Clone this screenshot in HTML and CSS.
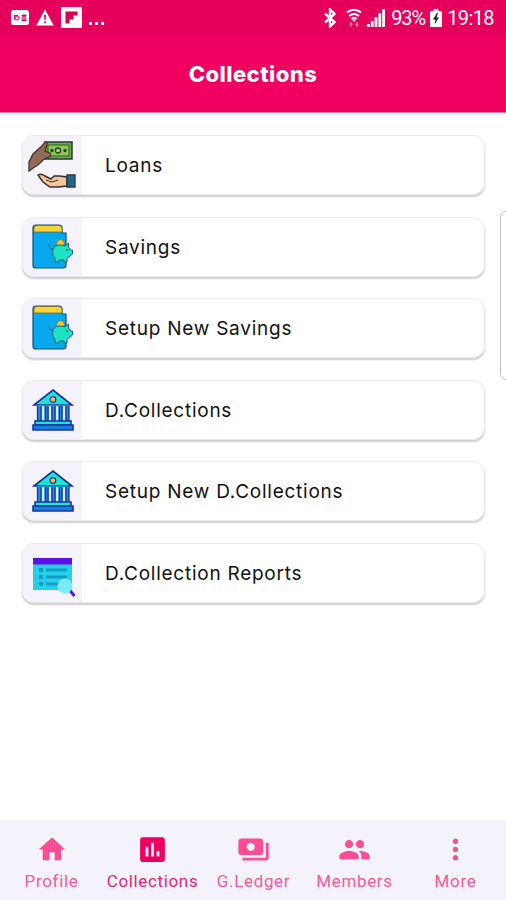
FILE: index.html
```html
<!DOCTYPE html>
<html lang="en">
<head>
    <meta charset="UTF-8">
    <meta name="viewport" content="width=device-width, initial-scale=1.0">
    <title>Collections</title>
    <link rel="stylesheet" href="styles.css">
</head>
<body>
    <svg class="defs" width="0" height="0">
        <symbol id="wallet" viewBox="0 0 42 46">
            <path d="M2 4Q2 1 5 1H28Q31 1 31 4V9H35V41Q35 44 32 44H5Q2 44 2 41Z" fill="#06a9ee" stroke="#164b76" stroke-width="1.2"/>
            <path d="M3 8V4Q3 1.5 6 1.5H28Q31 1.5 31 5V8Z" fill="#fbd43c" stroke="#7a6a2c" stroke-width=".8"/>
            <circle cx="29.500" cy="19.500" r="3.800" fill="#fcc52e" stroke="#8b7130" stroke-width=".7"/>
            <path d="M22 26C22 21 29 20 34 22L37.500 19V23L39.500 26H41.500V30L39 32 36 34V38H33V36H28V38H24V34C22 32 21 29 22 26Z" fill="#1de3c6" stroke="#12647b" stroke-width="1"/>
            <path d="M18 20Q18 26 22 25" fill="none" stroke="#12647b"/>
            <circle cx="36" cy="26" r=".9" fill="#164b60"/>
        </symbol>
        <symbol id="bank" viewBox="0 0 42 42">
            <g stroke="#1b349a" stroke-width="1.600">
                <path d="M2 16 21 1 40 16Z" fill="#1ee2d3"/>
                <path d="M5 16H37V33H5Z" fill="#1b8fe0" stroke="none"/>
                <path d="M11 17V33M18 17V33M25 17V33M32 17V33" stroke="#d9ecff" stroke-width="2.600"/>
                <path d="M5.500 17V33M9 17V33M13.500 17V33M16 17V33M20 17V33M23 17V33M27.500 17V33M30 17V33M34 17V33M37 17V33" stroke-width="1.300"/>
                <path d="M3 32H39V36H3Z" fill="#1ee2d3"/>
                <path d="M1 36H41V41H1Z" fill="#1580dc"/>
                <circle cx="21" cy="10.500" r="2.800" fill="#f3bf4a" stroke-width="1.200"/>
            </g>
        </symbol>
    </svg>

    <header class="top">
        <div class="status">
            <div class="status-left">
                <svg width="18" height="15" viewBox="0 0 18 15"><rect width="18" height="15" rx="2.500" fill="#fff"/><g fill="none" stroke="#e4005b" stroke-width="1"><circle cx="6" cy="8" r="2"/><path d="M3 5.500H7M3.500 5V9.500M10.500 5.500H15.500M10.500 10.500H15.500M13 4V11"/><circle cx="13" cy="8" r="2"/></g></svg>
                <svg width="18" height="17" viewBox="0 0 18 17"><path d="M9 .5 17.800 16.500H.2Z" fill="#fff"/><path d="M8 6H10L9.600 11H8.400ZM8.200 12.200H9.800V14H8.200Z" fill="#e4005b"/></svg>
                <svg width="21" height="21" viewBox="0 0 21 21"><path d="M0 0H21V21H0Z" fill="#fff"/><path d="M4.500 4.500H16.500V8.500H12.500V12.500H8.500V16.500H4.500Z" fill="#d40052"/></svg>
                <svg width="15" height="21" viewBox="0 0 15 21"><path d="M0 15H3V18H0ZM6 15H9V18H6ZM12 15H15V18H12Z" fill="#fff"/></svg>
            </div>
            <div class="status-right">
                <svg class="bluetooth" width="12" height="20" viewBox="0 0 12 20"><path d="M1 5.500 10.500 14 6 18.500V1.500L10.500 6 1 14.500" fill="none" stroke="#fff" stroke-width="2.400"/></svg>
                <svg class="wifi" width="16" height="20" viewBox="0 0 16 20"><g fill="none" stroke="#fff" stroke-width="2"><path d="M.8 4.500Q8-1 15.200 4.500M3 8Q8 4 13 8M5.200 11Q8 8.500 10.800 11"/></g><path d="M6 11.500H10L8 14Z" fill="#fff"/><path d="M3 16.500 5 14 7 16.500H5.600V19H4.400V16.500ZM9 16.500H10.400V14H11.600V16.500H13L11 19Z" fill="#ff8ab8"/></svg>
                <svg class="signal" width="18" height="18" viewBox="0 0 18 18"><path d="M0 15H2.800V18H0ZM3.800 12H6.600V18H3.800ZM7.600 8H10.400V18H7.600ZM11.400 4H14.200V18H11.400ZM15.200 0H18V18H15.200Z" fill="#fff"/></svg>
                <span class="percent">93%</span>
                <svg class="battery" width="12" height="18" viewBox="0 0 12 18"><path d="M3.500 0H8.500V2H12V18H0V2H3.500Z" fill="#fff"/><path d="M7 4 3 10.500H5.500L4.500 15.500 9 8.500H6.500L8 4Z" fill="#222"/></svg>
                <span class="clock">19:18</span>
            </div>
        </div>
        <h1 class="title">Collections</h1>
    </header>

    <main class="list">
        <a class="card">
            <span class="card-icon loans">
                <svg width="50" height="50" viewBox="0 0 50 50">
                    <path d="M19 3H46V20H19Z" fill="#72ac43" stroke="#263b30" stroke-width="1.500"/>
                    <path d="M22 6H43V17H22Z" fill="#8bc951" stroke="#315a31" stroke-width="1"/>
                    <g fill="#b8dc79" stroke="#263b30" stroke-width="1.300"><circle cx="32" cy="11.500" r="2.500"/><circle cx="26" cy="11.500" r="1"/><circle cx="39" cy="11.500" r="1"/></g>
                    <path d="M3 32V23L7 15 16 7 19 3Q22 2 21 6L19 12 24 14Q26 17 23 18L18 20 13 25Z" fill="#926b58" stroke="#42332f" stroke-width="1.300"/>
                    <path d="M12 36Q15 34 19 37L25 40 28 37H34L41 38V47L32 48H24L17 43Z" fill="#f2c59b" stroke="#3b302e" stroke-width="1.500"/>
                    <path d="M20 41 26 43 32 41" fill="none" stroke="#3b302e"/>
                    <path d="M41 36H49V48H41Z" fill="#27658d" stroke="#25394c" stroke-width="1.300"/>
                </svg>
            </span>
            <span class="card-text">Loans</span>
        </a>
        <a class="card">
            <span class="card-icon wallet"><svg width="42" height="46"><use href="#wallet"/></svg></span>
            <span class="card-text">Savings</span>
        </a>
        <a class="card">
            <span class="card-icon wallet"><svg width="42" height="46"><use href="#wallet"/></svg></span>
            <span class="card-text">Setup New Savings</span>
        </a>
        <a class="card">
            <span class="card-icon"><svg width="42" height="42"><use href="#bank"/></svg></span>
            <span class="card-text">D.Collections</span>
        </a>
        <a class="card">
            <span class="card-icon"><svg width="42" height="42"><use href="#bank"/></svg></span>
            <span class="card-text">Setup New D.Collections</span>
        </a>
        <a class="card">
            <span class="card-icon report">
                <svg width="43" height="39" viewBox="0 0 43 39">
                    <path d="M0 0H39V32H0Z" fill="#28cfe8"/>
                    <path d="M0 0H39V6.500H0Z" fill="#5b10e8"/>
                    <path d="M6 10H10V14H6ZM6 17H10V21H6ZM6 24H10V28H6ZM13 10.500H34V13.500H13ZM13 17.500H34V20.500H13ZM13 24.500H26V27.500H13Z" fill="#129dc5"/>
                    <path d="M36.500 32 41.500 38" stroke="#5b10e8" stroke-width="3"/>
                    <circle cx="32" cy="28" r="7.500" fill="#7aecf6"/>
                </svg>
            </span>
            <span class="card-text">D.Collection Reports</span>
        </a>
    </main>

    <!-- edge panel handle -->
    <div class="edge-handle"></div>

    <nav class="tabs">
        <a class="tab">
            <svg width="32" height="32" viewBox="0 0 24 24"><path d="M10 20v-6h4v6h5v-8h3L12 3 2 12h3v8z"/></svg>
            <span>Profile</span>
        </a>
        <a class="tab active">
            <svg width="33" height="33" viewBox="0 0 24 24"><path d="M19 3H5c-1.100 0-2 .9-2 2v14c0 1.100.9 2 2 2h14c1.100 0 2-.9 2-2V5c0-1.100-.9-2-2-2zM9 17H7v-7h2v7zm4 0h-2V7h2v10zm4 0h-2v-4h2v4z"/></svg>
            <span>Collections</span>
        </a>
        <a class="tab">
            <svg width="33" height="33" viewBox="0 0 24 24"><path d="M19 14V6c0-1.100-.9-2-2-2H3c-1.100 0-2 .9-2 2v8c0 1.100.9 2 2 2h14c1.100 0 2-.9 2-2zm-9-1c-1.660 0-3-1.340-3-3s1.340-3 3-3 3 1.340 3 3-1.340 3-3 3zm13-6v11c0 1.100-.9 2-2 2H4v-2h17V7h2z"/></svg>
            <span>G.Ledger</span>
        </a>
        <a class="tab">
            <svg width="33" height="33" viewBox="0 0 24 24"><path d="M16 11c1.660 0 2.990-1.340 2.990-3S17.660 5 16 5s-3 1.340-3 3 1.340 3 3 3zm-8 0c1.660 0 2.990-1.340 2.990-3S9.660 5 8 5 5 6.340 5 8s1.340 3 3 3zm0 2c-2.330 0-7 1.170-7 3.500V19h14v-2.500c0-2.330-4.670-3.500-7-3.500zm8 0c-.29 0-.62.02-.97.05 1.160.84 1.970 1.970 1.970 3.450V19h6v-2.500c0-2.330-4.670-3.500-7-3.500z"/></svg>
            <span>Members</span>
        </a>
        <a class="tab">
            <svg width="33" height="33" viewBox="0 0 24 24"><path d="M12 8c1.100 0 2-.9 2-2s-.9-2-2-2-2 .9-2 2 .9 2 2 2zm0 2c-1.100 0-2 .9-2 2s.9 2 2 2 2-.9 2-2-.9-2-2-2zm0 6c-1.100 0-2 .9-2 2s.9 2 2 2 2-.9 2-2-.9-2-2-2z"/></svg>
            <span>More</span>
        </a>
    </nav>
</body>
</html>
```
FILE: styles.css
```css
html, body {
    margin: 0;
    padding: 0;
    height: 100%;
}
body {
    display: flex;
    flex-direction: column;
    overflow: hidden;
    background: #fff;
    font-family: Roboto, sans-serif;
}
svg {
    display: block;
    flex-shrink: 0;
}
.defs {
    position: absolute;
}
.top {
    height: 112px;
    background: #f00060;
    border-bottom: 1px solid #f47ca5;
    color: #fff;
}
.status {
    display: flex;
    justify-content: space-between;
    box-sizing: border-box;
    height: 35px;
    padding: 0 12px 0 11px;
    background: #e4005b;
}
.status-left, .status-right {
    display: flex;
    align-items: center;
    height: 35px;
}
.status-left {
    gap: 7px;
}
.status-right {
    font-size: 20px;
}
.bluetooth {
    margin-right: 10px;
}
.wifi {
    margin-right: 5px;
}
.signal {
    margin-right: 6px;
}
.percent {
    width: 35px;
    margin-right: 4px;
    letter-spacing: -1.1px;
}
.battery {
    margin-right: 5px;
}
.clock {
    letter-spacing: -0.6px;
}
.title {
    margin: 0;
    font: 800 22px/78px Inter, sans-serif;
    letter-spacing: 0.45px;
    text-align: center;
}
.list {
    display: flex;
    flex: 1;
    flex-direction: column;
    gap: 21.6px;
    padding: 22px 21px 0 22px;
}
.card {
    display: flex;
    box-sizing: border-box;
    height: 60px;
    border: 1px solid #ececee;
    border-radius: 12px;
    background: #fff;
    box-shadow: 0 2px 2px rgba(0, 0, 0, 0.2);
    overflow: hidden;
}
.card-icon {
    display: flex;
    align-items: center;
    justify-content: center;
    box-sizing: border-box;
    width: 59px;
    background: #f4f3fb;
}
.card-icon.loans {
    padding: 0 3px 2px 0;
}
.card-icon.wallet {
    padding-right: 2px;
}
.card-icon.report {
    padding: 9px 0 0 4px;
}
.card-text {
    padding-left: 23px;
    color: #111;
    font: 19px/60px Inter, sans-serif;
    letter-spacing: 0.75px;
}
.edge-handle {
    position: absolute;
    top: 211px;
    right: -8px;
    box-sizing: border-box;
    width: 14px;
    height: 169px;
    border: 1px solid #c4c4c4;
    border-radius: 6px;
    background: #fff;
}
.tabs {
    display: flex;
    height: 80px;
    padding-left: 1px;
    background: #f4f3fb;
}
.tab {
    display: flex;
    flex: 1 0 0;
    flex-direction: column;
    align-items: center;
    color: #f75a98;
    font-size: 17px;
    letter-spacing: 0.65px;
}
.tab svg {
    height: 33px;
    margin: 13px 0 5px;
    fill: #fb4c94;
}
.tab.active {
    color: #e5266e;
}
.tab.active svg {
    fill: #ee0060;
}
```
